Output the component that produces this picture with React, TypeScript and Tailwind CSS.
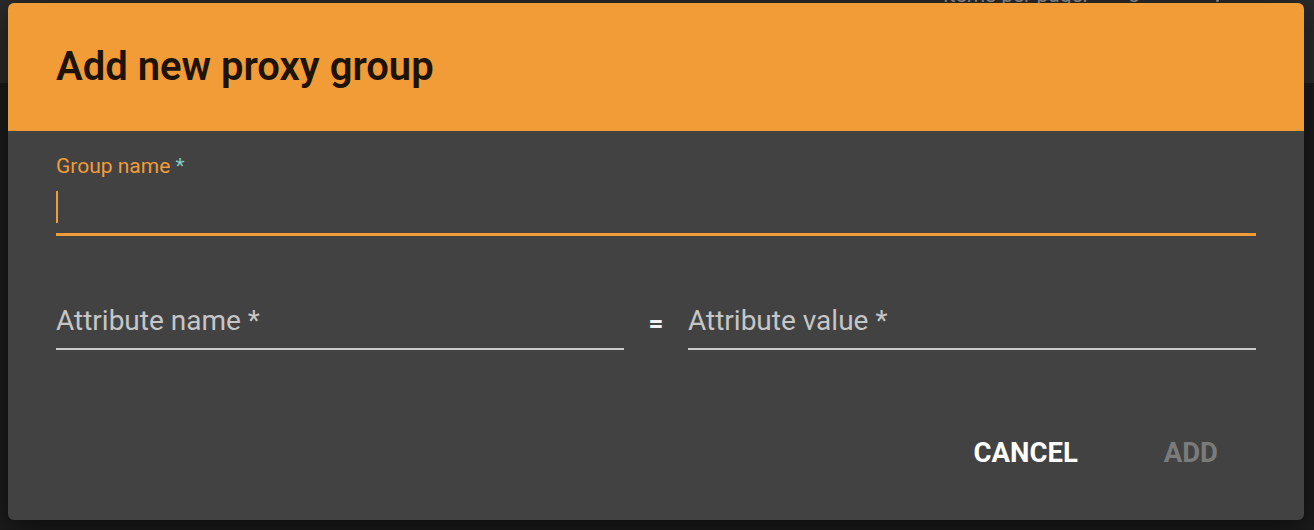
import React from "react";

export default function App() {
  return (
    <div
      className="relative w-[1314px] h-[530px] overflow-hidden bg-[#1b1b1b]"
      style={{ fontFamily: "Roboto, 'Liberation Sans', sans-serif" }}
    >
      {/* background page behind the overlay */}
      <div className="h-[83px] bg-[#2a2a2a] relative">
        <div className="absolute left-[943px] top-[-17px] text-[21px] leading-[24px] text-[#8d8d8d] flex items-center gap-[40px]">
          <span>Items per page:</span>
          <span>5</span>
        </div>
        <div className="absolute left-[1216px] top-[-3px] w-[3px] h-[5px] bg-[#8d8d8d] rounded-full" />
      </div>

      {/* dialog */}
      <div className="absolute left-[8px] top-[3px] w-[1296px] h-[517px] rounded-[6px] overflow-hidden bg-[#424242] shadow-[0_8px_30px_rgba(0,0,0,0.5)] flex flex-col">
        <div className="h-[128px] bg-[#f29c38] px-[48px] pt-[44px]">
          <h1 className="text-[40px] leading-[40px] font-semibold text-[#1e1307]">
            Add new proxy group
          </h1>
        </div>

        <div className="px-[48px] pt-[25px] flex flex-col">
          {/* group name */}
          <div className="flex flex-col">
            <label className="text-[21px] leading-[21px] text-[#f29c38] font-normal">
              Group name <span className="text-[#80cbc4]">*</span>
            </label>
            <div className="h-[56px] pt-[14px]">
              <div className="w-[2px] h-[32px] bg-[#f29c38]" />
            </div>
            <div className="h-[3px] bg-[#f29c38]" />
          </div>

          {/* attributes row */}
          <div className="mt-[71px] flex items-end">
            <div className="w-[568px] flex flex-col">
              <span className="text-[28px] leading-[28px] text-[#c6c6c6]">
                Attribute name *
              </span>
              <div className="mt-[13px] h-[2px] bg-[#cbcbcb]" />
            </div>
            <div className="w-[64px] flex justify-center pb-[14px]">
              <span className="text-[26px] leading-[26px] font-bold text-[#f2f2f2]">=</span>
            </div>
            <div className="w-[568px] flex flex-col">
              <span className="text-[28px] leading-[28px] text-[#c6c6c6]">
                Attribute value *
              </span>
              <div className="mt-[13px] h-[2px] bg-[#cbcbcb]" />
            </div>
          </div>

          {/* actions */}
          <div className="mt-[89px] flex justify-end pr-[38px] gap-[86px]">
            <button className="text-[27.5px] leading-[28px] font-bold text-white">
              CANCEL
            </button>
            <button className="text-[27.5px] leading-[28px] font-bold text-[#7b7b7b]" disabled>
              ADD
            </button>
          </div>
        </div>
      </div>
    </div>
  );
}
